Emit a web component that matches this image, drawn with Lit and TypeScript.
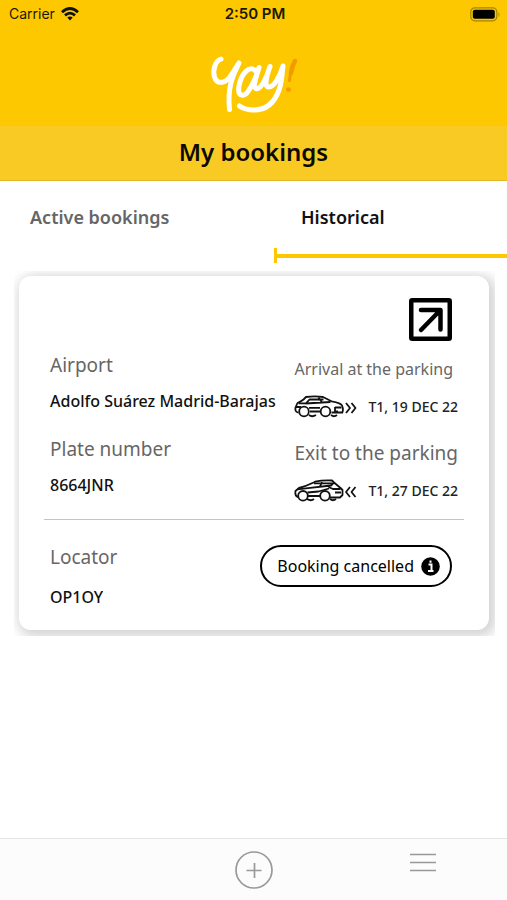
import { LitElement, html, css, svg } from "lit";
import { customElement, state } from "lit/decorators.js";
import { classMap } from "lit/directives/class-map.js";

const arrivingCar = svg`
  <path d="M15 20q3 2.500 7 0M37 20q3 2.500 6 0"/>
  <path d="M4.500 17.500C2 17.500 1 15.500 1.500 12.500L3.500 8Q7 6.500 9.500 4.500L12 2Q21 .6 29 2L37.500 6.300C43 7.300 47 8 48 10.500Q49.700 14.500 48.300 17.500H37.500"/>
  <path d="M4.500 8.300h7.500l3.500-3.800h14M11.500 8.500l25-1.500M24.500 2.500l3.500 5M2 12h5M15 12.800h11M16 16.500h10M41 12.500h6.500M41 12v4.500h3"/>
  <circle cx="10" cy="16.500" r="4.800" fill="#fff"/><circle cx="31.500" cy="16.500" r="4.800" fill="#fff"/>
  <path d="M52 8l4 5-4 5M57.500 8l4 5-4 5"/>`;

const leavingCar = svg`
  <path d="M13 20q4 2.500 7 0M36 20q3 2.500 6 0"/>
  <path d="M4 18C1.500 17.500 1 15 1.500 12L5 9C12 7.500 16 5 21 2.700Q29 1 38 1.500L40 3.500L46.500 9L48.500 11V16L46 18.500H36"/>
  <path d="M3.500 10.300L14 9.200L37 6.500L40 3.500M20 4.300h18M28 3l-2 4.500M34.500 8l4.500 2h7.500M13.500 13.500l11-1L35 9.500M14 17h12M41 13.500h6"/>
  <circle cx="9" cy="16.800" r="4.800" fill="#fff"/><circle cx="31" cy="16.800" r="4.800" fill="#fff"/>
  <path d="M56 8l-4 5 4 5M61.500 8l-4 5 4 5"/>`;

@customElement("status-bar")
class StatusBar extends LitElement {
  static styles = css`
    :host {
      display: grid;
      grid-template-columns: 1fr auto 1fr;
      align-items: center;
      height: 28px;
      padding: 0 6px 0 9px;
      font: 400 14px/20px Inter, sans-serif;
      color: #1c1800;
    }
    .carrier { display: flex; align-items: center; gap: 6px; }
    .time { font-weight: 600; font-size: 15px; }
    .battery { justify-self: end; }
    svg { display: block; }
  `;
  render() {
    return html`
      <span class="carrier">Carrier
        <svg width="18" height="14" viewBox="0 0 18 14" fill="none" stroke="#111" stroke-width="2.800">
          <path d="M1 5.200Q9-2.200 17 5.200M4 8.400Q9 3.800 14 8.400"/>
          <path d="M6.300 10.500Q9 8.300 11.700 10.500L9 13.500Z" fill="#111" stroke="none"/>
        </svg>
      </span>
      <span class="time">2:50 PM</span>
      <svg class="battery" width="31" height="15" viewBox="0 0 31 15">
        <rect x=".8" y=".8" width="26" height="13" rx="4" fill="none" stroke="#a58400" stroke-width="1.200"/>
        <rect x="2.800" y="2.800" width="22" height="9" rx="2" fill="#000"/>
        <path d="M28.500 5q2 2.500 0 5z" fill="#a58400"/>
      </svg>`;
  }
}

@customElement("booking-card")
class BookingCard extends LitElement {
  static styles = css`
    :host { display: block; padding: 5px 6px 6px 5px; overflow: hidden; }
    .card {
      background: #fff;
      border-radius: 12px;
      padding: 22px 25px 21px;
      box-shadow: 3px 3px 12px 4px rgba(0, 0, 0, 0.17);
    }
    .top { display: flex; justify-content: flex-end; padding-right: 12px; }
    .open { padding: 0; border: 0; background: none; cursor: pointer; }
    svg { display: block; flex: none; }
    .details {
      display: flex;
      justify-content: space-between;
      padding: 12px 6px 16px;
      border-bottom: 1px solid #c4c4c4;
    }
    dl, dd { margin: 0; }
    .list { display: flex; flex-direction: column; gap: 24px; }
    .trips { gap: 22px; padding-top: 4px; }
    .item { display: flex; flex-direction: column; gap: 12px; }
    dt { font-size: 19px; line-height: 24px; color: #666; white-space: nowrap; }
    dt.small { font-size: 16px; }
    dd { font-size: 16px; font-weight: 500; line-height: 24px; color: #111; white-space: nowrap; }
    .trips .item { gap: 14px; }
    .trips dd { display: flex; justify-content: space-between; align-items: center; font-size: 14px; color: #222; }
    .car { fill: none; stroke: #111; stroke-width: 1.800; stroke-linejoin: round; }
    .bottom { display: flex; justify-content: space-between; align-items: flex-start; padding: 25px 12px 0 6px; }
    .bottom .item { gap: 16px; }
    .status {
      display: flex;
      align-items: center;
      justify-content: center;
      gap: 7px;
      height: 42px;
      padding: 0 10px 0 15px;
      border: 2px solid #000;
      border-radius: 21px;
      background: #fff;
      color: #000;
      font: inherit;
      font-size: 16px;
      white-space: nowrap;
      cursor: pointer;
    }
  `;
  trip(label: string, small: boolean, car: unknown, text: string) {
    return html`<div class="item">
      <dt class=${classMap({ small })}>${label}</dt>
      <dd><svg class="car" width="63" height="24" viewBox="0 0 63 24">${car}</svg>${text}</dd>
    </div>`;
  }
  item(label: string, value: string) {
    return html`<div class="item"><dt>${label}</dt><dd>${value}</dd></div>`;
  }
  render() {
    return html`<article class="card">
      <div class="top">
        <button class="open" aria-label="Open booking">
          <svg width="43" height="43" viewBox="0 0 43 43" fill="none" stroke="#000" stroke-width="4.500">
            <rect x="2.250" y="2.250" width="38.500" height="38.500" rx="1"/>
            <path d="M12 12H31.500V31.500M31 12.500L12 32" stroke-linecap="round" stroke-linejoin="round"/>
          </svg>
        </button>
      </div>
      <div class="details">
        <dl class="list">
          ${this.item("Airport", "Adolfo Suárez Madrid-Barajas")}
          ${this.item("Plate number", "8664JNR")}
        </dl>
        <dl class="list trips">
          ${this.trip("Arrival at the parking", true, arrivingCar, "T1, 19 DEC 22")}
          ${this.trip("Exit to the parking", false, leavingCar, "T1, 27 DEC 22")}
        </dl>
      </div>
      <div class="bottom">
        <dl>${this.item("Locator", "OP1OY")}</dl>
        <button class="status">Booking cancelled
          <svg width="19" height="19" viewBox="0 0 19 19">
            <circle cx="9.500" cy="9.500" r="9.300" fill="#000"/>
            <path d="M7.500 7.500h3v6.500M7 14h5.500M9.500 3.500v2.200" fill="none" stroke="#fff" stroke-width="2"/>
          </svg>
        </button>
      </div>
    </article>`;
  }
}

@customElement("app-root")
class AppRoot extends LitElement {
  @state() tab = "Historical";

  static styles = css`
    :host {
      display: flex;
      flex-direction: column;
      min-height: 100vh;
      background: #fff;
      font-family: "Noto Sans", "Open Sans", sans-serif;
    }
    svg { display: block; }
    header { background: #fdc800; }
    .logo { display: flex; justify-content: center; height: 98px; box-sizing: border-box; padding-top: 24px; }
    h1 {
      margin: 0;
      height: 54px;
      font-size: 24px;
      line-height: 52px;
      font-weight: 600;
      text-align: center;
      color: #0c0a00;
      background: #f9ca24;
      border-bottom: 1px solid #e3b72a;
    }
    .tabs { display: grid; grid-template-columns: 274px 1fr; height: 84px; }
    .tab {
      display: flex;
      flex-direction: column;
      padding: 24px 0 0 30px;
      border: 0;
      background: none;
      font: inherit;
      font-size: 18px;
      line-height: 24px;
      font-weight: 600;
      color: #666;
      text-align: left;
      cursor: pointer;
    }
    .tab.on { color: #111; }
    .right { padding-left: 27px; }
    .half { display: flex; flex-direction: column; gap: 19px; }
    .mark { display: flex; align-items: center; }
    .mark::before { content: ""; width: 3px; height: 15px; background: #fdc800; }
    .mark::after { content: ""; flex: 1; height: 4px; background: #fdc800; }
    main { flex: 1; padding: 6px 12px 24px 14px; }
    nav {
      display: grid;
      grid-template-columns: 1fr 1fr 1fr;
      justify-items: center;
      height: 61px;
      border-top: 1px solid #e4e4e4;
      background: #fcfcfc;
    }
    .nav { padding: 0; border: 0; background: none; align-self: start; cursor: pointer; }
    .add { grid-column: 2; padding-top: 12px; }
    .menu { padding-top: 14px; }
  `;
  tabButton(label: string, extra: string) {
    const on = this.tab === label;
    return html`<div class="half">
      <button class=${classMap({ tab: true, on, [extra]: true })} @click=${() => (this.tab = label)}>${label}</button>
      ${on ? html`<span class="mark"></span>` : ""}
    </div>`;
  }
  render() {
    return html`
      <header>
        <status-bar></status-bar>
        <div class="logo">
          <svg width="92" height="64" viewBox="0 0 92 64" fill="none" stroke-linecap="round" stroke-linejoin="round" role="img" aria-label="Yay!">
            <g stroke="#fff" stroke-width="5">
              <path d="M13 7C7 9 4.500 18 6.500 25C8.500 32 16 32 21 26C25 21 28 15 31 11C26 22 19 33 21.500 57.500"/>
              <path d="M47.500 19C42 12 33 22 31 34C29 46 37 45 41 38C45 32 48 25 51 15.500C48 25 45 35 48 36.500C53 38 59 25 62 14.500C59 23 56 34 60 35C66 36 72 24 75 14C74 22 74 30 71 38C66 52 57 58 46 58Q37 58 31.500 54"/>
            </g>
            <path d="M87 8.500Q83 16 81.500 28.500" stroke="#f39a00" stroke-width="3"/>
            <path d="M87 9Q84 14 83 21M80.300 37.500h.4" stroke="#f39a00" stroke-width="4.500"/>
          </svg>
        </div>
        <h1>My bookings</h1>
      </header>
      <div class="tabs">
        ${this.tabButton("Active bookings", "left")}
        ${this.tabButton("Historical", "right")}
      </div>
      <main><booking-card></booking-card></main>
      <nav>
        <button class="nav add" aria-label="New booking">
          <svg width="38" height="38" viewBox="0 0 38 38" fill="none" stroke="#999" stroke-width="1.700">
            <circle cx="19" cy="19" r="18"/><path d="M11.500 19.500h15M19.500 12v15"/>
          </svg>
        </button>
        <button class="nav menu" aria-label="Menu">
          <svg width="26" height="20" viewBox="0 0 26 20" stroke="#999" stroke-width="1.700">
            <path d="M0 1.500h26M0 9.500h26M0 17.500h26"/>
          </svg>
        </button>
      </nav>`;
  }
}
